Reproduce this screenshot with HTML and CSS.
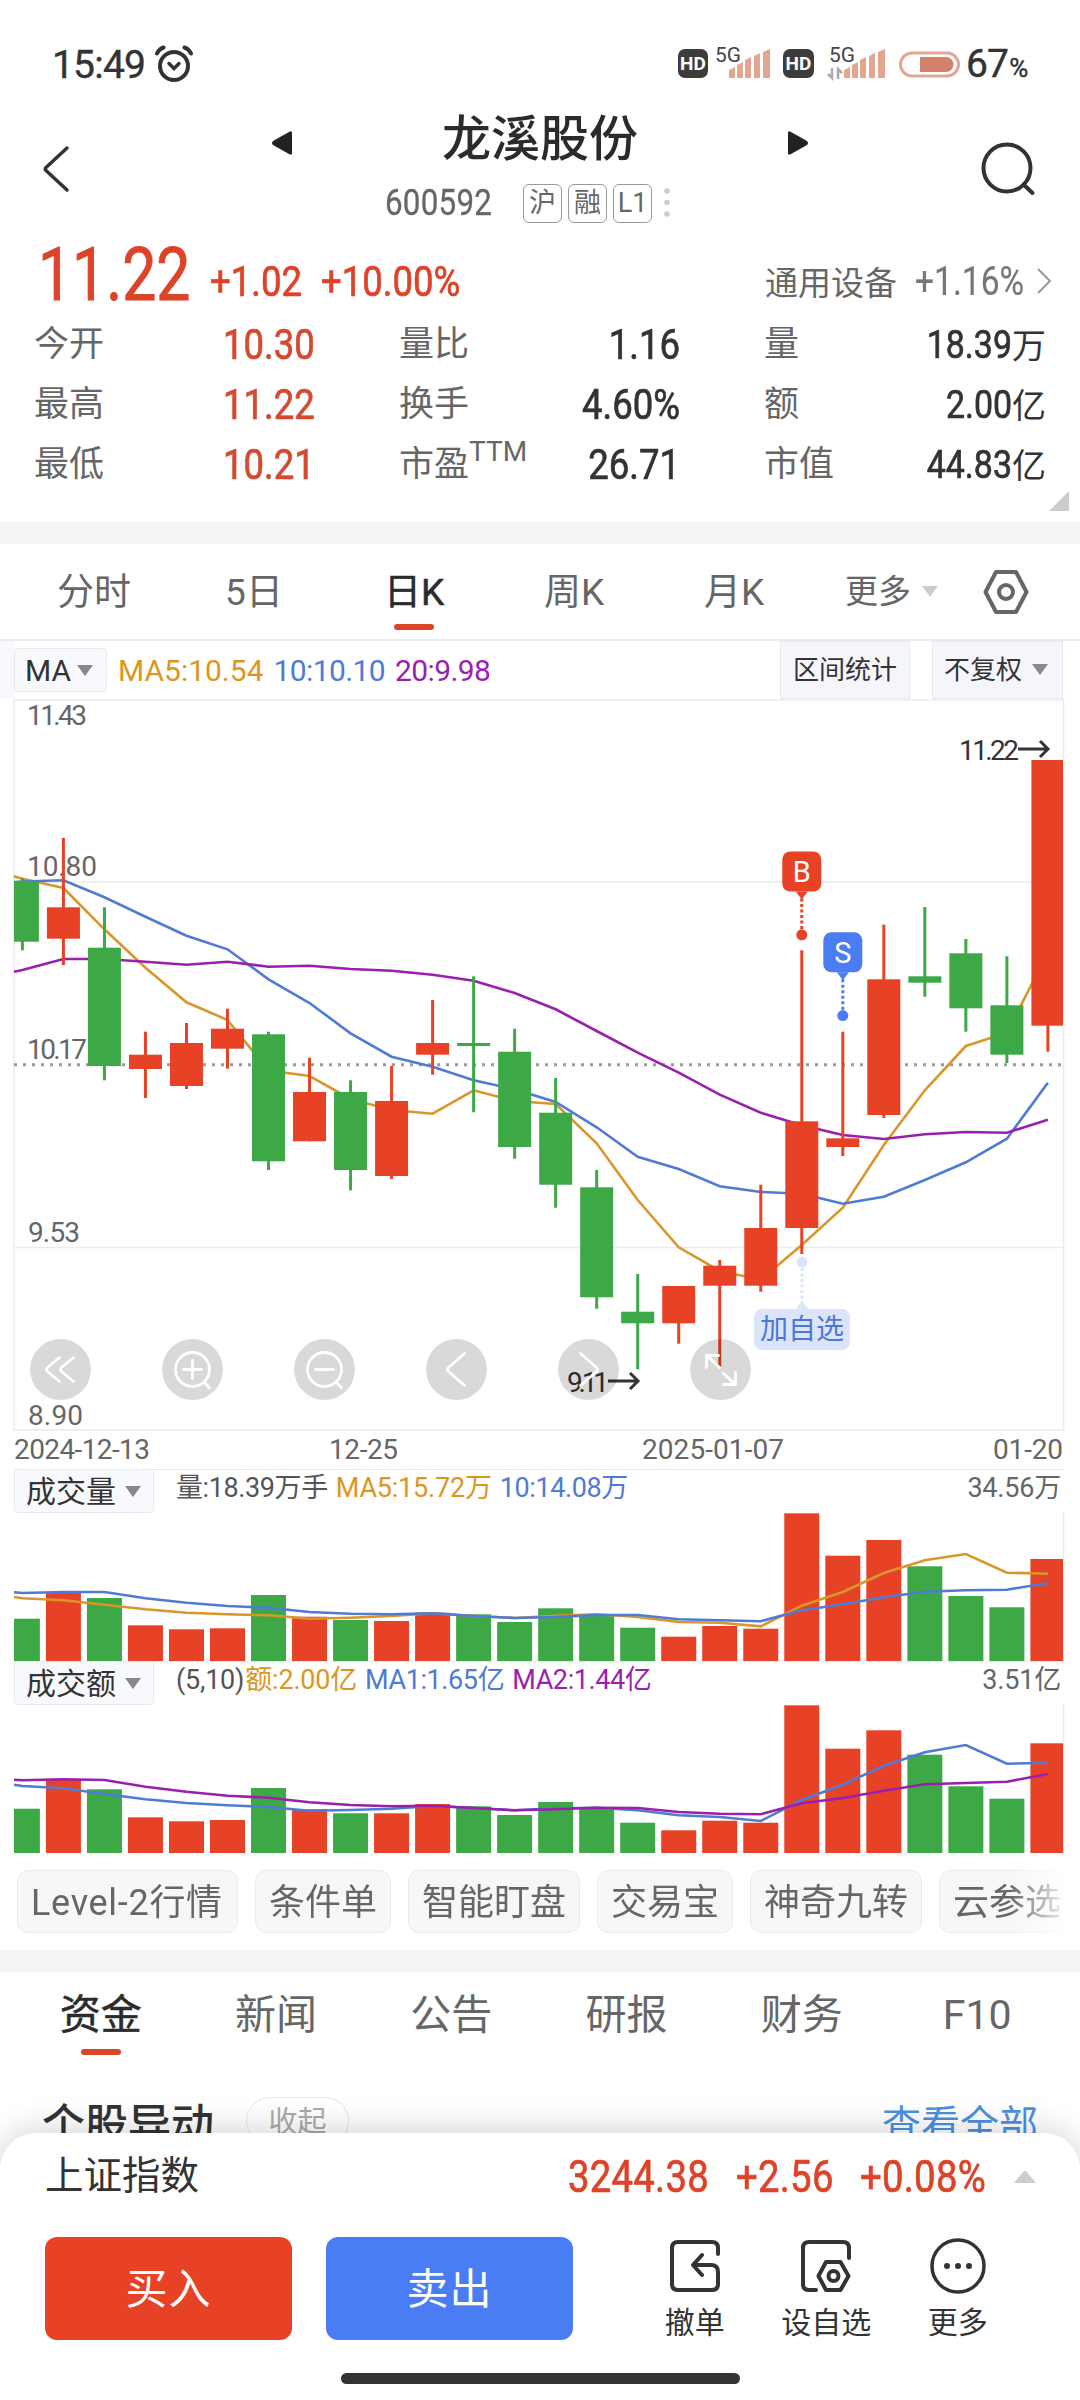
FILE: index.html
```html
<!DOCTYPE html>
<html lang="zh-CN">
<head>
    <meta charset="UTF-8">
    <meta name="viewport" content="width=device-width, initial-scale=1.0">
    <title>龙溪股份 600592</title>
    <link rel="stylesheet" href="styles.css">
</head>
<body>
    <div class="page">
        <div class="statusbar">
            <span class="clock">15:49</span>
            <svg class="alarm" width="40" height="38" viewBox="0 0 40 38" fill="none" stroke="#333" stroke-width="4" stroke-linecap="round">
                <circle cx="20" cy="21" r="14"/>
                <path d="M3 8.500Q5 4 9.500 2.500M37 8.500Q35 4 30.500 2.500"/>
                <path d="M15 18.500l5 5l5-5" stroke-width="3.500"/>
            </svg>
            <svg class="signals" width="290" height="44" viewBox="675 42 290 44">
                <rect x="678" y="49" width="30" height="29" rx="7" fill="#3c3c3c"/>
                <text x="693" y="69.500" class="hd">HD</text>
                <text x="715" y="62" class="net" textLength="26" lengthAdjust="spacingAndGlyphs">5G</text>
                <g fill="#e3a78f">
                    <path d="M729 78v-8l6-3v11zM737 78v-13l6-3v16zM745 78v-18l6-3v21zM754 78v-22l6-3v25zM763 78v-26l7-3v29z"/>
                    <path d="M844 78v-8l6-3v11zM852 78v-13l6-3v16zM860 78v-18l6-3v21zM869 78v-22l6-3v25zM878 78v-26l7-3v29z"/>
                </g>
                <rect x="783" y="49" width="31" height="29" rx="7" fill="#3c3c3c"/>
                <text x="798.500" y="69.500" class="hd">HD</text>
                <text x="829" y="62" class="net" textLength="26" lengthAdjust="spacingAndGlyphs">5G</text>
                <path d="M832 68v10l-4-4M838 79v-10l4 4" fill="none" stroke="#aaa" stroke-width="2.500"/>
                <rect x="900.500" y="53" width="58" height="23" rx="11.500" fill="#fff" stroke="#dfa797" stroke-width="3"/>
                <path d="M920 57h26a7.500 7.500 0 0 1 0 15h-26z" fill="#d3816b"/>
            </svg>
            <span class="battery">67<small>%</small></span>
        </div>

        <header class="header">
            <svg class="back" width="30" height="50" viewBox="0 0 30 50" fill="none" stroke="#333" stroke-width="3.500" stroke-linecap="round" stroke-linejoin="round">
                <path d="M26 4L5 23.500q-1.500 1.500 0 3L26 46"/>
            </svg>
            <div class="stock">
                <div class="stock-name">
                    <svg width="20" height="26" viewBox="0 0 20 26"><path d="M20 3v20q0 3-3 1L1 15q-2-2 0-4L17 2q3-2 3 1z" fill="#222"/></svg>
                    <h1>龙溪股份</h1>
                    <svg width="20" height="26" viewBox="0 0 20 26"><path d="M0 3v20q0 3 3 1L19 15q2-2 0-4L3 2Q0 0 0 3z" fill="#222"/></svg>
                </div>
                <div class="stock-code">
                    <span class="code num">600592</span>
                    <span class="tag">沪</span>
                    <span class="tag">融</span>
                    <span class="tag">L1</span>
                    <svg width="6" height="30" viewBox="0 0 6 30" fill="#ccc"><circle cx="3" cy="3" r="2.800"/><circle cx="3" cy="14.500" r="2.800"/><circle cx="3" cy="26" r="2.800"/></svg>
                </div>
            </div>
            <svg class="search" width="56" height="56" viewBox="0 0 56 56" fill="none" stroke="#333" stroke-width="4" stroke-linecap="round">
                <circle cx="27" cy="27" r="23.500"/><path d="M43.500 43.500l9 8.500"/>
            </svg>
        </header>

        <section class="quote">
            <div class="price-row red">
                <span class="price num">11.22</span>
                <span class="num">+1.02</span>
                <span class="num">+10.00%</span>
                <span class="sector">通用设备</span>
                <span class="sector-change num">+1.16%</span>
                <svg width="16" height="28" viewBox="0 0 16 28" fill="none" stroke="#999" stroke-width="2"><path d="M2 2l12 12L2 26"/></svg>
            </div>
            <div class="stats">
                <span>今开</span><b class="num red left">10.30</b>
                <span>量比</span><b class="num">1.16</b>
                <span class="third">量</span><b class="unit"><i class="num">18.39</i>万</b>
                <span>最高</span><b class="num red left">11.22</b>
                <span>换手</span><b class="num">4.60%</b>
                <span class="third">额</span><b class="unit"><i class="num">2.00</i>亿</b>
                <span>最低</span><b class="num red left">10.21</b>
                <span>市盈<sup>TTM</sup></span><b class="num">26.71</b>
                <span class="third">市值</span><b class="unit"><i class="num">44.83</i>亿</b>
            </div>
            <i class="corner"></i>
        </section>

        <nav class="periods">
            <a>分时</a>
            <a>5日</a>
            <a class="active">日K</a>
            <a>周K</a>
            <a>月K</a>
            <span class="more">更多<i class="caret light"></i></span>
            <svg width="46" height="46" viewBox="0 0 46 46" fill="none" stroke="#666" stroke-width="4" stroke-linejoin="round">
                <path d="M13 3h20l10.500 20L33 43H13L2.500 23z"/><circle cx="23" cy="23" r="7"/>
            </svg>
        </nav>

        <div class="ma-row">
            <span class="chip ma">MA<i class="caret"></i></span>
            <span class="orange">MA5:10.54</span>
            <span class="blue">10:10.10</span>
            <span class="purple">20:9.98</span>
            <span class="chip range">区间统计</span>
            <span class="chip adjust">不复权<i class="caret"></i></span>
        </div>

        <svg id="kline" class="chart" width="1080" height="770" viewBox="0 699 1080 770"></svg>

        <div class="sub-head">
            <span class="chip">成交量<i class="caret"></i></span>
            <span>量:18.39万手</span>
            <span class="orange">MA5:15.72万</span>
            <span class="blue">10:14.08万</span>
            <span class="max">34.56万</span>
        </div>
        <svg id="volume" class="chart" width="1080" height="148" viewBox="0 1513 1080 148"></svg>

        <div class="sub-head">
            <span class="chip">成交额<i class="caret"></i></span>
            <span class="params">(5,10)</span>
            <span class="orange">额:2.00亿</span>
            <span class="blue">MA1:1.65亿</span>
            <span class="purple">MA2:1.44亿</span>
            <span class="max">3.51亿</span>
        </div>
        <svg id="amount" class="chart" width="1080" height="148" viewBox="0 1705 1080 148"></svg>

        <div class="tools">
            <span>Level-2行情</span>
            <span>条件单</span>
            <span>智能盯盘</span>
            <span>交易宝</span>
            <span>神奇九转</span>
            <span>云参选</span>
        </div>

        <nav class="info-tabs">
            <a class="active">资金</a>
            <a>新闻</a>
            <a>公告</a>
            <a>研报</a>
            <a>财务</a>
            <a>F10</a>
        </nav>

        <section class="moves">
            <h2>个股异动</h2>
            <span class="fold">收起</span>
            <a class="all">查看全部</a>
        </section>

        <footer class="sheet">
            <div class="index-row">
                <span class="index-name">上证指数</span>
                <span class="num">3244.38</span>
                <span class="num">+2.56</span>
                <span class="num">+0.08%</span>
                <i class="caret up"></i>
            </div>
            <div class="actions">
                <button class="buy">买入</button>
                <button class="sell">卖出</button>
                <div class="action">
                    <svg width="56" height="56" viewBox="0 0 56 56" fill="none" stroke="#333" stroke-width="4" stroke-linecap="round" stroke-linejoin="round">
                        <path d="M51 16v-6q0-6-6-6H11q-6 0-6 6v36q0 6 6 6h34q6 0 6-6V34q0-7-7-7H27M35 17l-9 10l9 10"/>
                    </svg>
                    <span>撤单</span>
                </div>
                <div class="action">
                    <svg width="56" height="56" viewBox="0 0 56 56" fill="none" stroke="#333" stroke-width="4" stroke-linecap="round" stroke-linejoin="round">
                        <path d="M51 20V10q0-6-6-6H11q-6 0-6 6v36q0 6 6 6h7"/>
                        <path d="M28 24h14.500l8 14l-8 14H28l-7.500-14z"/><circle cx="35.500" cy="38" r="5"/>
                    </svg>
                    <span>设自选</span>
                </div>
                <div class="action">
                    <svg width="56" height="56" viewBox="0 0 56 56" fill="none" stroke="#333" stroke-width="3.500">
                        <circle cx="28" cy="28" r="26"/>
                        <g fill="#333" stroke="none"><circle cx="17" cy="28" r="3"/><circle cx="28" cy="28" r="3"/><circle cx="39" cy="28" r="3"/></g>
                    </svg>
                    <span>更多</span>
                </div>
            </div>
            <div class="home-bar"></div>
        </footer>
    </div>
    <script src="chart.js"></script>
</body>
</html>
```

FILE: styles.css
```css
* {
    box-sizing: border-box;
}
body {
    margin: 0;
    background-color: #fff;
    color: #333;
    font-family: Roboto, "Noto Sans CJK SC", sans-serif;
}
.page {
    position: relative;
    width: 1080px;
    height: 2400px;
    overflow: hidden;
}
svg {
    display: block;
    flex: none;
}
h1, h2 {
    margin: 0;
}
i, b {
    font-style: normal;
    font-weight: 400;
}
.red { color: #dc4329; }
.orange { color: #dc961f; }
.blue { color: #4f7bd5; }
.purple { color: #9b1fae; }

/* narrow figures for prices */
.num {
    display: inline-block;
    transform: scaleX(0.87);
    transform-origin: left center;
    white-space: nowrap;
    -webkit-text-stroke: 0.7px currentColor;
}

/* status bar */
.statusbar {
    display: flex;
    align-items: center;
    height: 104px;
    padding: 24px 0 0 52px;
}
.clock, .battery {
    font-size: 39px;
    line-height: 40px;
    letter-spacing: -0.8px;
    padding-top: 2px;
    -webkit-text-stroke: 0.4px currentColor;
}
.clock {
    width: 102px;
}
.signals {
    margin-left: 481px;
}
.battery {
    margin-left: 1px;
    padding-top: 4px;
}
.battery small {
    font-size: 26px;
    margin-left: 1px;
}
.hd {
    font-size: 19px;
    font-weight: 700;
    fill: #fff;
    text-anchor: middle;
}
.net {
    font-size: 20px;
    fill: #444;
}

/* title */
.header {
    display: flex;
    height: 132px;
    padding: 0 44px 0 41px;
}
.back {
    margin-top: 40px;
}
.stock {
    width: 913px;
    padding-top: 4px;
}
.stock-name {
    display: flex;
    align-items: center;
    height: 60px;
    padding-left: 201px;
}
.stock-name h1 {
    width: 496px;
    text-align: center;
    font-size: 49px;
    line-height: 60px;
    font-weight: 500;
    color: #2b2b2b;
    margin-top: 4px;
}
.stock-name svg {
    margin-top: 9px;
}
.stock-code {
    display: flex;
    align-items: center;
    height: 40px;
    margin-top: 15px;
    padding-left: 314px;
}
.code {
    width: 138px;
    font-size: 36px;
    letter-spacing: 0.3px;
    color: #666;
    -webkit-text-stroke-width: 0.3px;
}
.tag {
    width: 39px;
    height: 39px;
    margin-right: 6px;
    border: 1.5px solid #999;
    border-radius: 6px;
    color: #666;
    font-size: 27px;
    line-height: 37px;
    text-align: center;
}
.stock-code svg {
    margin-left: 6px;
}
.search {
    margin-top: 37px;
}

/* quote */
.quote {
    position: relative;
    height: 308px;
    padding: 0 35px;
    border-bottom: 22px solid #f4f4f4;
}
.price-row {
    display: grid;
    grid-template-columns: 175px 111px 444px 150px 121px 16px;
    align-items: center;
    height: 74px;
    font-size: 42px;
    padding-top: 16px;
}
.price-row .price {
    font-size: 74px;
    line-height: 60px;
    -webkit-text-stroke-width: 1px;
    transform: scaleX(0.82);
    margin: -13px 0 0 3px;
}
.sector {
    font-size: 33px;
    color: #666;
}
.price-row .sector-change {
    font-size: 40px;
    color: #777;
    -webkit-text-stroke-width: 0.2px;
    transform: scaleX(0.84);
}
.stats {
    display: grid;
    grid-template-columns: 189px 176px 151px 130px 200px 166px;
    grid-auto-rows: 60px;
    line-height: 60px;
    margin-left: -1px;
    padding-top: 5px;
    font-size: 35px;
    color: #666;
    white-space: nowrap;
}
.stats .third {
    padding-left: 84px;
}
.stats b {
    color: #333;
    font-size: 42px;
    text-align: right;
    transform-origin: right center;
}
.stats b.red {
    color: #d44a30;
}
.stats b.left {
    text-align: left;
    transform-origin: left center;
}
.stats b.unit {
    font-size: 34px;
}
.unit .num {
    font-size: 39px;
    transform-origin: right center;
}
.stats sup {
    font-size: 28px;
    line-height: 0;
    vertical-align: 15px;
}
.corner {
    position: absolute;
    right: 11px;
    bottom: 11px;
    border-left: 20px solid transparent;
    border-bottom: 20px solid #ccc;
}

/* period tabs */
.periods {
    display: flex;
    align-items: center;
    height: 97px;
    padding-left: 14px;
    border-bottom: 2px solid #ebebeb;
    color: #666;
}
.periods a, .info-tabs a {
    position: relative;
    width: 160px;
    text-align: center;
    font-size: 37px;
    line-height: 44px;
    padding-top: 2px;
}
.periods .active, .info-tabs .active {
    color: #2b2b2b;
    -webkit-text-stroke: 0.5px currentColor;
}
.active::after {
    content: "";
    position: absolute;
    left: calc(50% - 20px);
    bottom: -15px;
    width: 40px;
    height: 6px;
    border-radius: 3px;
    background-color: #dc4329;
}
.more {
    display: flex;
    align-items: center;
    width: 138px;
    margin-left: 31px;
    font-size: 33px;
    line-height: 40px;
}
.caret {
    display: inline-block;
    margin-left: 8px;
    border: 8px solid transparent;
    border-top: 11px solid #888;
    border-bottom: 0;
}
.caret.light {
    margin-left: 11px;
    border-top-color: #ccc;
}

/* indicators */
.ma-row {
    display: flex;
    align-items: center;
    height: 58px;
    font-size: 30px;
    background: linear-gradient(#f8f9fd, #f8f9fd) left / 14px 100% no-repeat;
    padding-left: 14px;
}
.chip {
    display: flex;
    align-items: center;
    background-color: #f8f9fd;
    border: 1px solid #e8e9ee;
    border-radius: 4px;
    color: #333;
}
.chip.ma {
    width: 93px;
    height: 44px;
    padding-left: 10px;
    margin-right: 11px;
}
.chip.ma .caret {
    margin-left: 6px;
}
.ma-row .orange, .ma-row .blue {
    margin-right: 10px;
}
.ma-row .blue, .ma-row .purple {
    letter-spacing: -0.6px;
}
.chip.range, .chip.adjust {
    height: 58px;
    border-radius: 0;
    background-color: #f5f6fc;
    font-size: 26px;
    line-height: 36px;
    padding-bottom: 1px;
}
.chip.range {
    width: 130px;
    margin-left: auto;
    padding-left: 12px;
}
.chip.adjust {
    width: 131px;
    margin: 0 17px 0 22px;
    padding-left: 11px;
}
.chip.adjust .caret {
    margin-left: 10px;
}

/* charts */
.chart text {
    font-size: 28px;
    fill: #666;
}
.chart .dark {
    fill: #333;
}
.chart .mark {
    fill: #fff;
    font-size: 29px;
    text-anchor: middle;
}
.chart .watch {
    fill: #4a78d8;
    text-anchor: middle;
}
.sub-head {
    display: flex;
    align-items: flex-start;
    height: 44px;
    margin: 0 16px 0 14px;
    border-top: 1px solid #ebebeb;
    font-size: 27px;
    line-height: 37px;
    color: #555;
    white-space: nowrap;
}
.sub-head span {
    margin-right: 8px;
    letter-spacing: -0.4px;
}
.sub-head .orange:nth-child(3), .sub-head .max {
    letter-spacing: -0.2px;
}
.sub-head .chip {
    width: 140px;
    height: 43px;
    padding-left: 11px;
    margin-right: 22px;
    font-size: 30px;
    letter-spacing: 0;
    border-top: 0;
}
.sub-head .chip .caret {
    margin-left: 9px;
}
.sub-head .params {
    margin-right: 1px;
    letter-spacing: -0.2px;
}
.sub-head .max {
    margin-left: auto;
    margin-right: 3px;
    color: #666;
}

/* shortcuts */
.tools {
    display: flex;
    gap: 17px;
    height: 119px;
    margin-right: 17px;
    padding: 17px 0 0 17px;
    overflow: hidden;
    -webkit-mask-image: linear-gradient(to right, #000 1010px, transparent 1070px);
    mask-image: linear-gradient(to right, #000 1010px, transparent 1070px);
}
.tools span {
    flex: none;
    height: 63px;
    padding: 0 13px;
    border: 1.5px solid #ebebeb;
    border-radius: 11px;
    background-color: #f7f7f7;
    color: #666;
    font-size: 36px;
    line-height: 64px;
}
.tools span:first-child {
    width: 221px;
    letter-spacing: 0.7px;
}

/* info */
.info-tabs {
    display: flex;
    align-items: center;
    height: 130px;
    margin-top: -22px;
    padding-left: 13px;
    border-top: 22px solid #f4f4f4;
    color: #666;
}
.info-tabs a {
    width: 175.3px;
    font-size: 41px;
    line-height: 60px;
    margin-top: -24px;
}
.info-tabs .active::after {
    bottom: -10px;
}
.moves {
    display: flex;
    padding: 15px 42px 0;
}
.moves h2 {
    width: 204px;
    font-size: 43px;
    line-height: 60px;
    font-weight: 500;
}
.fold {
    width: 103px;
    height: 48px;
    margin-top: 2px;
    border: 1.5px solid #e6e6e6;
    border-radius: 24px;
    color: #aaa;
    font-size: 29px;
    line-height: 48px;
    text-align: center;
}
.all {
    margin-left: auto;
    font-size: 39px;
    line-height: 60px;
    color: #4a90e2;
}

/* bottom sheet */
.sheet {
    position: absolute;
    left: 0;
    right: 0;
    bottom: 0;
    height: 267px;
    border-radius: 36px 36px 0 0;
    background-color: #fff;
    box-shadow: 0 0 36px rgba(0, 0, 0, 0.2);
}
.index-row {
    display: grid;
    grid-template-columns: 523px 168px 124px 154px 22px;
    align-items: center;
    height: 88px;
    padding-left: 45px;
    font-size: 44px;
    color: #dc4329;
}
.index-row .num {
    letter-spacing: 0.3px;
}
.index-name {
    font-size: 38.5px;
    line-height: 50px;
    padding-bottom: 2px;
    color: #333;
}
.caret.up {
    margin: 0;
    border-width: 0 10px 12px;
    border-bottom: 12px solid #ccc;
}
.actions {
    display: flex;
    padding: 16px 0 0 45px;
}
.actions button {
    width: 247px;
    height: 103px;
    margin-right: 34px;
    padding: 0 0 6px;
    border: none;
    border-radius: 12px;
    color: #fff;
    font-family: inherit;
    font-size: 42px;
    letter-spacing: 1px;
}
.buy {
    background-color: #e84226;
}
.sell {
    background-color: #4a7cf3;
}
.action {
    display: flex;
    flex-direction: column;
    align-items: center;
    width: 131.500px;
    font-size: 30px;
}
.action:nth-child(3) {
    margin-left: 22px;
}
.action svg {
    margin-top: 1px;
}
.action span {
    line-height: 36px;
    margin-top: 11px;
}
.home-bar {
    width: 399px;
    height: 11px;
    margin: 32px auto 0;
    border-radius: 6px;
    background-color: #333;
}
```

FILE: chart.js
```javascript
const RED = '#e84226', GREEN = '#3da946';
const ORANGE = '#d9962b', BLUE = '#4f7bd5', PURPLE = '#9b1fae';
const LEFT = 14, RIGHT = 1063;

const x = i => 22.4 + 41.02 * i;
const dirs = 'grgrrrgrgrrgggggrrrrrrgggr';

// [high, body top, body bottom, low]
const candles = [
    [878.3, 881, 941.7, 950.3], [838, 907.3, 938.7, 965], [907.3, 947.7, 1066, 1080.3],
    [1031.7, 1054.7, 1069, 1098], [1023, 1043, 1086, 1089], [1008.7, 1028.7, 1048.7, 1068.7],
    [1031.7, 1034.3, 1161.3, 1170], [1057.7, 1092, 1141.3, 1141.3], [1080.3, 1092, 1170, 1190.3],
    [1066, 1101, 1176, 1179], [1000, 1043, 1054.7, 1074.7], [976.3, 1043, 1046, 1112.3],
    [1028.7, 1051.7, 1147, 1158.7], [1078, 1112.7, 1184.7, 1207.7], [1170, 1187.3, 1297.3, 1308.7],
    [1274, 1311.7, 1323.3, 1369.3], [1286, 1286, 1323.3, 1343.7], [1260, 1265.7, 1285.7, 1366.7],
    [1184.7, 1228, 1285.7, 1291.7], [950.3, 1121.3, 1228, 1254], [1031.7, 1138.3, 1147, 1156],
    [924.7, 979.3, 1115, 1118], [907, 976.3, 982.7, 996.7], [939, 953.3, 1008.3, 1031.7],
    [956.3, 1005.3, 1054.7, 1063], [760, 760, 1025.7, 1051.7]
];

// first value of every line is its height at the left edge
const ma5 = [876.3, 878.7, 888, 929.3, 967.7, 1002.3, 1020, 1070.5, 1076, 1099, 1110, 1113.7, 1090.3, 1101, 1104, 1143.3, 1200, 1247.3, 1271, 1279.7, 1245, 1207.7, 1145, 1090.3, 1046, 1032.7, 952.5];
const ma10 = [882, 881.5, 880.3, 897.3, 916.7, 935.7, 949.3, 979.3, 1003, 1033.3, 1056.7, 1066.7, 1080.3, 1089.3, 1102, 1127.3, 1156.7, 1169, 1186.3, 1192, 1193.8, 1203.7, 1196.7, 1180, 1162.3, 1138.7, 1082.7];
const ma20 = [971.7, 970, 959, 959, 961.7, 964.7, 961.7, 966.7, 965.7, 969, 970.7, 974.7, 980.7, 993, 1009.3, 1031, 1052.7, 1072.7, 1094.7, 1112.7, 1125.3, 1135, 1139, 1134.3, 1132, 1132.7, 1119.7];

const volume = [1618.7, 1593, 1598, 1625.3, 1629.3, 1628.3, 1595, 1616.7, 1620, 1621, 1612.7, 1614.3, 1622, 1608.3, 1616, 1627.7, 1636.7, 1626, 1628.7, 1513.3, 1555.7, 1540, 1566.3, 1596, 1607.3, 1559];
const volMa5 = [1597, 1598.3, 1600.3, 1604.7, 1609.3, 1612.7, 1614.3, 1615.3, 1618.7, 1617.7, 1616, 1613.3, 1616, 1618, 1615.7, 1614.3, 1617, 1622, 1622.7, 1626.3, 1605.7, 1592, 1573, 1560.3, 1554, 1572.7, 1573.7];
const volMa10 = [1592.3, 1593, 1592, 1592, 1598.3, 1602.7, 1606, 1607.7, 1612, 1613.7, 1614.3, 1613.3, 1616, 1618, 1617, 1615, 1615, 1619.3, 1620.3, 1621.3, 1610.3, 1604.3, 1597.3, 1591.7, 1590.3, 1589.7, 1583];

const amount = [1808.7, 1780, 1789.3, 1817.3, 1821.3, 1820, 1788, 1809.3, 1813.3, 1813.3, 1804, 1806.3, 1815, 1802, 1808.3, 1822.7, 1830.3, 1820.7, 1822.7, 1705.3, 1748.7, 1730.3, 1754.7, 1786.3, 1798.7, 1743.3];
const amtMa5 = [1784.7, 1786, 1788.3, 1794, 1799.3, 1803, 1805.3, 1807, 1810.7, 1810, 1808.7, 1806, 1808, 1810.3, 1808.3, 1807.7, 1810.3, 1815.3, 1817, 1821, 1800, 1784.7, 1765.7, 1752.3, 1745, 1763.7, 1762.7];
const amtMa10 = [1779.7, 1780.3, 1779.3, 1780, 1786.7, 1791.7, 1795.7, 1797.7, 1802.3, 1805, 1806.3, 1805.7, 1808, 1810.3, 1809.3, 1807.7, 1808, 1812, 1813.7, 1814.3, 1803.3, 1798, 1790.7, 1784.3, 1783, 1781.7, 1774];

function line(values, color) {
    const pts = values.map((v, i) => `${i ? x(i - 1) : LEFT},${v}`).join(' ');
    return `<polyline points="${pts}" fill="none" stroke="${color}" stroke-width="2.6"/>`;
}

function bar(i, width, top, bottom) {
    const l = Math.max(LEFT, x(i) - width / 2);
    const r = Math.min(RIGHT, x(i) + width / 2);
    return `<rect x="${l}" y="${top}" width="${r - l}" height="${bottom - top}" fill="${dirs[i] === 'r' ? RED : GREEN}"/>`;
}

function label(text, lx, y, width, cls = '') {
    return `<text x="${lx}" y="${y}" class="${cls}" textLength="${width}" lengthAdjust="spacing">${text}</text>`;
}

function marker(i, top, text, color) {
    const cx = x(i);
    return `<rect x="${cx - 19.5}" y="${top}" width="39" height="40" rx="8" fill="${color}"/>
        <path d="M${cx - 6} ${top + 40}h12l-6 8z" fill="${color}"/>
        <text x="${cx}" y="${top + 30.5}" class="mark">${text}</text>
        <path d="M${cx} ${top + 47}v33" stroke="${color}" stroke-width="3" stroke-dasharray="3 2.5"/>
        <circle cx="${cx}" cy="${top + 83.3}" r="5.5" fill="${color}"/>`;
}

function drawKline() {
    let s = `<path d="M14 700H1063.500V1430H14zM14 882H1063M14 1247.500H1063" fill="none" stroke="#ebebeb" stroke-width="1.5"/>
        <path d="M14 1064.700H1063" stroke="#999" stroke-width="3" stroke-dasharray="3 6"/>`;
    s += label('11.43', 27, 725, 60) + label('10.80', 27, 876, 70) + label('10.17', 27, 1059, 60);
    s += label('9.53', 28, 1242, 52) + label('8.90', 28, 1425, 55);
    s += label('2024-12-13', 14, 1459, 136) + label('12-25', 329, 1459, 69);
    s += label('2025-01-07', 642, 1459, 142) + label('01-20', 993, 1459, 70);
    s += line(ma5, ORANGE) + line(ma10, BLUE) + line(ma20, PURPLE);
    candles.forEach(([high, top, bottom, low], i) => {
        s += bar(i, 3, high, low) + bar(i, 33, top, bottom);
    });
    s += label('11.22', 959, 760, 60, 'dark') + label('9.11', 567, 1392, 42, 'dark');
    s += `<path d="M1018 749H1047M1040 741L1048 749L1040 757M608 1381H637M630 1373L638 1381L630 1389" fill="none" stroke="#333" stroke-width="3"/>`;
    s += marker(19, 851.5, 'B', RED) + marker(20, 932.3, 'S', '#4a7cf3');
    s += `<circle cx="802" cy="1262" r="5.500" fill="#dbe4fa"/>
        <path d="M802 1268v34" stroke="#dbe4fa" stroke-width="3" stroke-dasharray="3 2.5"/>
        <path d="M796 1309l6-8l6 8z" fill="#dbe4fa"/>
        <rect x="754" y="1309" width="96" height="41" rx="8" fill="#dbe4fa"/>
        <text x="802" y="1339" class="watch">加自选</text>`;
    drawn.kline = s + buttons();
}

// round chart controls
function buttons() {
    const icons = [
        '<path d="M-1-12L-13-2q-2 2 0 4L-1 12M13-12L1-2q-2 2 0 4L13 12"/>',
        '<circle r="17"/><path d="M-9 0H9M0-9V9M12 13L17 18.500"/>',
        '<circle r="17"/><path d="M-9 0H9M12 13L17 18.500"/>',
        '<path d="M8-16L-8-2q-2 2 0 4L8 16"/>',
        '<path d="M-8-16L8-2q2 2 0 4L-8 16"/>',
        '<path d="M-14-2V-14H-2M-14-14L-1-2M15 3V15H3M15 15L3 4"/>'
    ];
    return icons.map((icon, i) => `<g transform="translate(${60.5 + 132 * i} 1369.5)">
        <circle r="30.500" fill="#000" fill-opacity="0.15"/>
        <g fill="none" stroke="#fff" stroke-width="2.8" stroke-linecap="round" stroke-linejoin="round">${icon}</g></g>`).join('');
}

function drawBars(name, tops, bottom, lines) {
    drawn[name] = `<path d="M1063.500 ${bottom - 148}V${bottom}" stroke="#ebebeb" stroke-width="1.5"/>`
        + tops.map((t, i) => bar(i, 35, t, bottom)).join('') + lines;
}

const drawn = {};
drawKline();
drawBars('volume', volume, 1661, line(volMa5, ORANGE) + line(volMa10, BLUE));
drawBars('amount', amount, 1853, line(amtMa5, BLUE) + line(amtMa10, PURPLE));
for (const id in drawn) {
    document.getElementById(id).innerHTML = drawn[id];
}
```
